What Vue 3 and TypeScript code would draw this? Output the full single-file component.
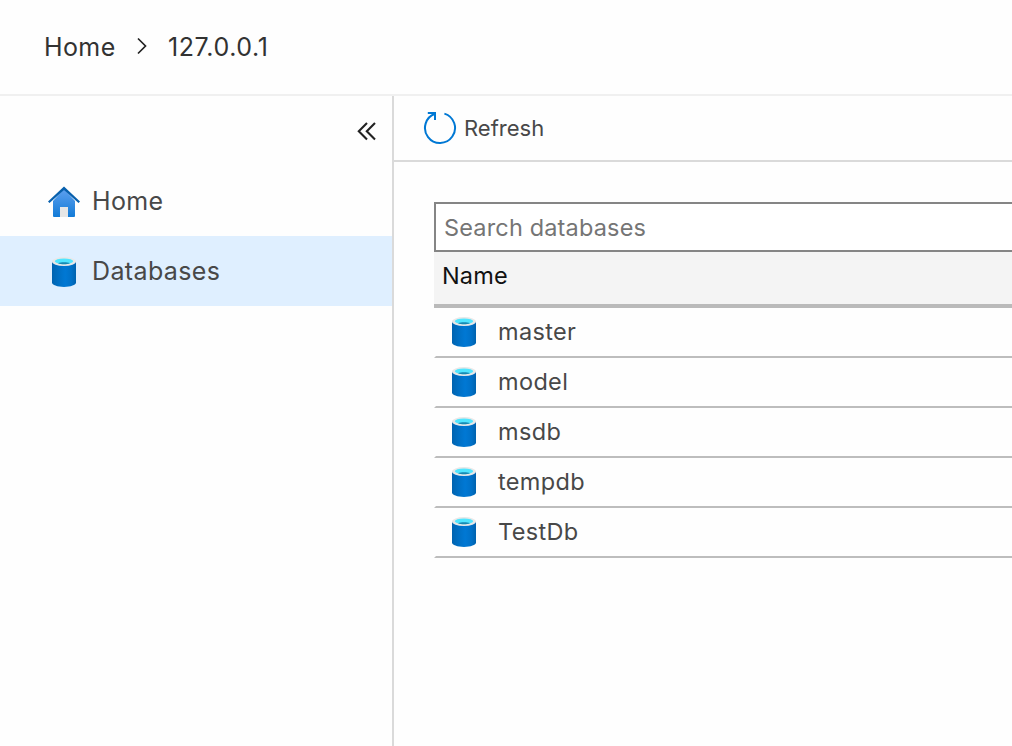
<script setup lang="ts">
const databases: string[] = ['master', 'model', 'msdb', 'tempdb', 'TestDb']
</script>

<template>
  <div class="portal">
    <svg class="defs" width="0" height="0" aria-hidden="true">
      <defs>
        <linearGradient id="cylinder" x1="0" x2="1" y1="0" y2="0">
          <stop offset="0" stop-color="#0062ae" />
          <stop offset="0.1" stop-color="#0068b8" />
          <stop offset="0.36" stop-color="#0072c9" />
          <stop offset="0.55" stop-color="#0078d4" />
          <stop offset="0.8" stop-color="#0071c8" />
          <stop offset="1" stop-color="#0062ae" />
        </linearGradient>
        <linearGradient id="walls" x1="0" x2="0" y1="0" y2="1">
          <stop offset="0" stop-color="#5ea0ef" />
          <stop offset="1" stop-color="#127bd7" />
        </linearGradient>
        <symbol id="database" viewBox="0 0 24 30">
          <path d="M0 4.8V25.6C0 28 5.4 30 12 30S24 28 24 25.6V4.8Z" fill="url(#cylinder)" />
          <ellipse cx="12" cy="4.6" rx="12" ry="4.5" fill="#e8e8e8" />
          <ellipse cx="12" cy="4.3" rx="9.2" ry="2.9" fill="#50e6ff" />
          <path d="M6 6.2C9 4.8 15 4.8 18 6.2C15 7.5 9 7.5 6 6.2Z" fill="#198ab3" />
        </symbol>
      </defs>
    </svg>

    <header class="breadcrumb">
      <span class="crumb-home">Home</span>
      <svg class="chevron" width="12" height="18" viewBox="0 0 12 18">
        <path d="M2 1.5L9.5 9L2 16.5" fill="none" stroke="#222" stroke-width="1.7" />
      </svg>
      <span class="crumb-host">127.0.0.1</span>
    </header>

    <div class="body">
      <nav class="sidebar">
        <div class="collapse">
          <svg width="20" height="20" viewBox="0 0 20 20">
            <path d="M10 2L1.8 10.2L10 18.4M18 2L9.8 10.2L18 18.4" fill="none" stroke="#222" stroke-width="2.1" />
          </svg>
        </div>
        <div class="nav-item">
          <svg width="32" height="32" viewBox="0 0 32 32">
            <path d="M5 15L16 3L27 15V30Q27 31 26 31H6Q5 31 5 30Z" fill="url(#walls)" />
            <path d="M12 21H20V31H12Z" fill="#e6e6e6" />
            <path d="M16 0.5L32 15.5L30.5 17L16 4L1.5 17L0 15.5Z" fill="#0860ad" />
          </svg>
          <span>Home</span>
        </div>
        <div class="nav-item selected">
          <svg class="nav-db" width="24" height="30"><use href="#database" /></svg>
          <span>Databases</span>
        </div>
      </nav>

      <main class="content">
        <div class="toolbar">
          <svg width="34" height="34" viewBox="0 0 34 34">
            <path d="M12 2.8A15 15 0 1 0 21.4 2.6M4.8 2H12V9" fill="none" stroke="#0078d4" stroke-width="2" />
          </svg>
          <span>Refresh</span>
        </div>
        <div class="panel">
          <input class="search" type="text" placeholder="Search databases" />
          <div class="heading"><span>Name</span></div>
          <div v-for="name in databases" :key="name" class="row">
            <svg width="24" height="30"><use href="#database" /></svg>
            <span>{{ name }}</span>
          </div>
        </div>
      </main>
    </div>
  </div>
</template>

<style>
body {
  overflow: hidden;
}
</style>

<style scoped>
.portal {
  box-sizing: border-box;
  width: 1012px;
  height: 746px;
  overflow: hidden;
  display: flex;
  flex-direction: column;
  background: #fefefe;
  color: #484848;
  font-family: Inter, "Liberation Sans", sans-serif;
  font-size: 25px;
}
.portal * {
  box-sizing: border-box;
}
.portal svg {
  display: block;
  flex: none;
}
.portal span {
  white-space: nowrap;
}
.portal .defs {
  height: 0;
  width: 0;
  overflow: hidden;
}
.breadcrumb {
  flex: none;
  height: 96px;
  padding: 0 0 2px 44px;
  display: flex;
  align-items: center;
  border-bottom: 2px solid #f0f0f0;
  color: #323232;
}
.crumb-home {
  width: 92px;
  padding-top: 2px;
  letter-spacing: 0.4px;
}
.crumb-host {
  padding-top: 2px;
  letter-spacing: 0.6px;
}
.chevron {
  margin-right: 20px;
}
.body {
  flex: 1;
  display: flex;
  min-height: 0;
}
.sidebar {
  width: 394px;
  flex: none;
  border-right: 2px solid #dadada;
}
.collapse {
  height: 70px;
  padding: 25px 15px 0 0;
  display: flex;
  justify-content: flex-end;
}
.nav-item {
  height: 70px;
  padding: 2px 0 0 48px;
  display: flex;
  align-items: center;
  gap: 12px;
  letter-spacing: 0.38px;
}
.nav-item span {
  padding-bottom: 2px;
}
.nav-item.selected {
  background: #dfefff;
}
.nav-db {
  margin: 0 4px;
}
.content {
  flex: 1;
  min-width: 0;
}
.toolbar {
  height: 66px;
  padding-left: 29px;
  display: flex;
  align-items: center;
  gap: 7px;
  border-bottom: 2px solid #dadada;
  font-size: 22px;
}
.panel {
  width: 640px;
  padding: 40px 0 0 40px;
  font-size: 23.5px;
}
.search {
  display: block;
  width: 100%;
  height: 50px;
  margin: 0;
  padding: 0 8px;
  border: 2px solid #858585;
  border-radius: 0;
  background: #fff;
  font: inherit;
  letter-spacing: 0.16px;
  outline: none;
}
.search::placeholder {
  color: #757575;
  opacity: 1;
}
.heading {
  height: 56px;
  padding: 0 8px 6px;
  display: flex;
  align-items: center;
  background: #f4f4f4;
  border-bottom: 4px solid #bababa;
  color: #111;
}
.heading span {
  letter-spacing: 0.15px;
}
.row {
  height: 50px;
  padding-left: 16px;
  display: flex;
  align-items: center;
  gap: 22px;
  border-left: 2px solid transparent;
  border-bottom: 2px solid #bdbdbd;
}
.row span {
  padding-bottom: 2px;
  letter-spacing: 0.35px;
}
</style>
